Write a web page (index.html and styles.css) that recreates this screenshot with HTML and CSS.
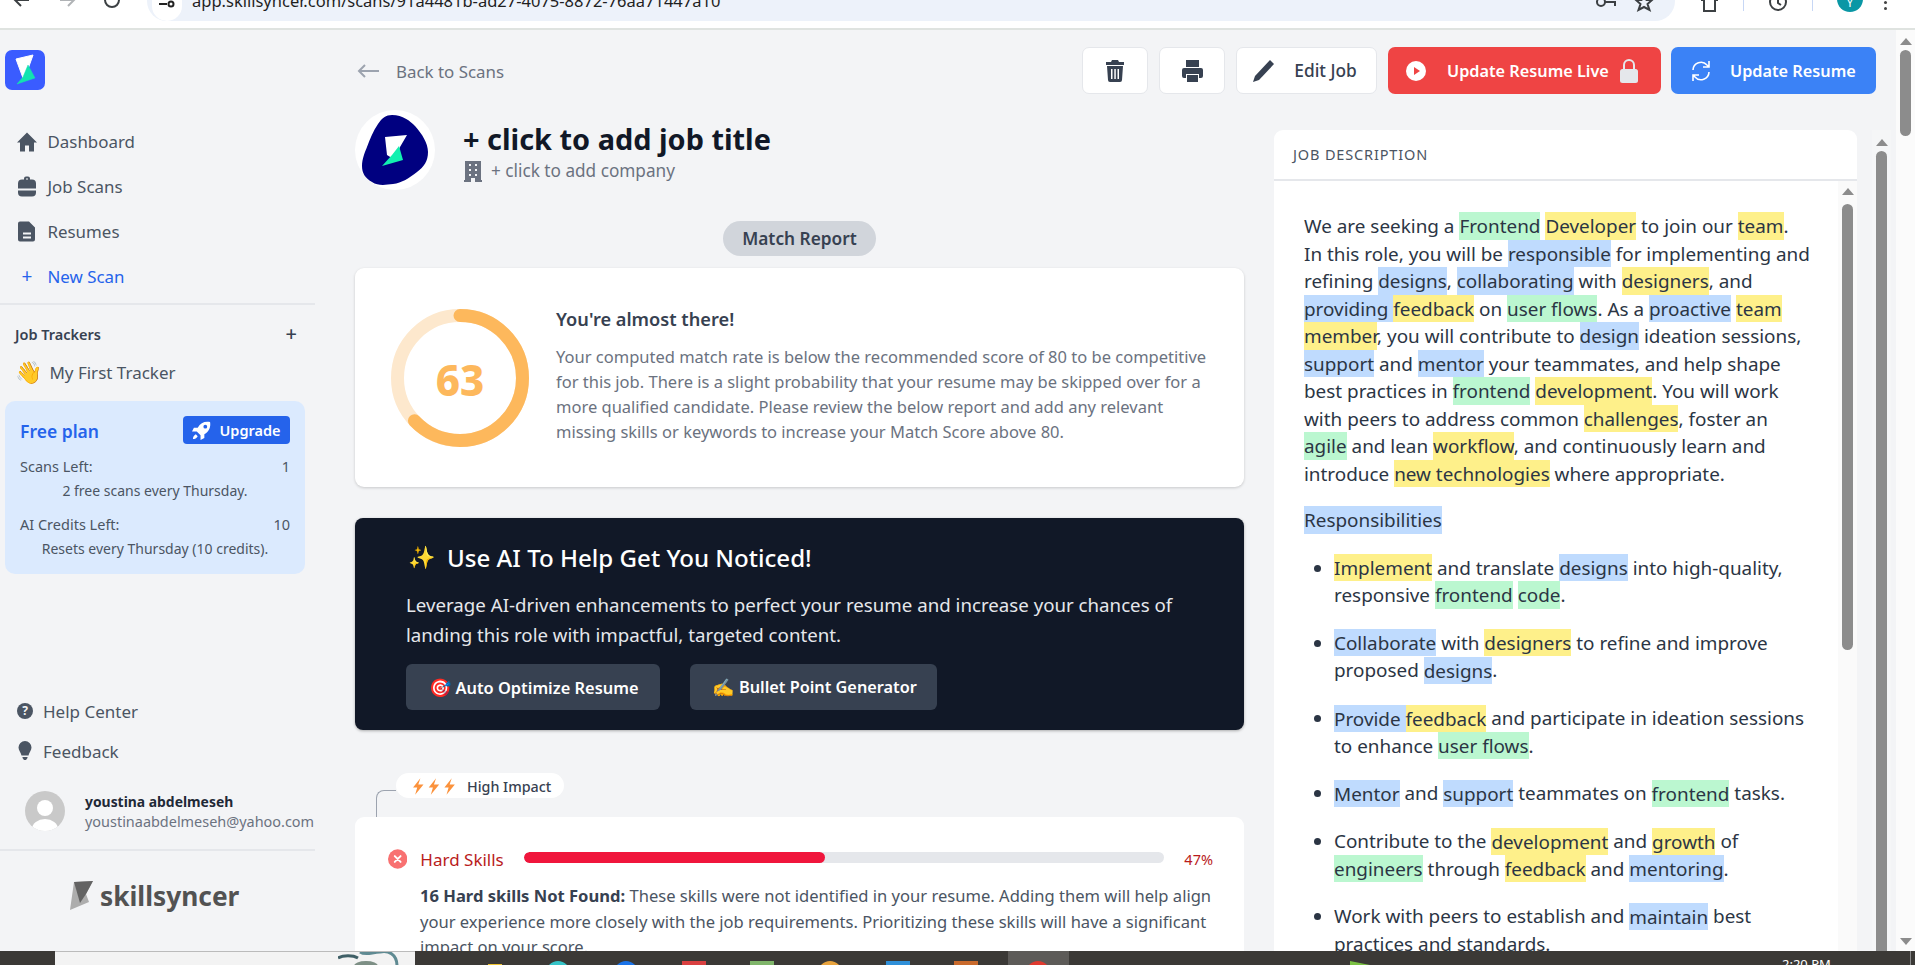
FILE: index.html
```html
<!DOCTYPE html>
<html lang="en">
<head>
<meta charset="utf-8">
<title>SkillSyncer</title>
<link rel="stylesheet" href="styles.css">
</head>
<body>
<header class="chrome">
  <div class="chrome-nav">
    <svg width="20" height="20" viewBox="0 0 20 20" class="cicon"><path d="M17 0H4M9-6L3 0l6 6" /></svg>
    <svg width="20" height="20" viewBox="0 0 20 20" class="cicon dim"><path d="M3 0h13M11-6l6 6-6 6" /></svg>
    <svg width="20" height="20" viewBox="0 0 20 20" class="cicon"><circle cx="10" cy="0" r="7"/></svg>
  </div>
  <div class="urlbar">
    <span class="tune"><svg width="16" height="8" viewBox="0 0 16 8" class="tune-ico"><path d="M0 4h8"/><circle cx="12" cy="4" r="2.500"/></svg></span>
    <span class="url">app.skillsyncer.com/scans/91a4481b-ad27-4075-8872-76aa71447a10</span>
    <span class="url-icons">
      <svg width="24" height="20" viewBox="0 0 24 20" class="cicon"><circle cx="6" cy="2" r="4"/><path d="M10 2h10v4" /></svg>
      <svg width="18" height="20" viewBox="0 0 18 20" class="cicon"><path d="M9-6l2.500 6H17l-4.500 4 2 6L9 7l-5.500 3 2-6L1 0h5.500z"/></svg>
    </span>
  </div>
  <div class="chrome-right">
    <svg width="20" height="20" viewBox="0 0 20 20" class="cicon"><path d="M2 0h3v11h11V0h3"/></svg>
    <span class="sep"></span>
    <svg width="20" height="20" viewBox="0 0 20 20" class="cicon"><circle cx="10" cy="2" r="8"/><path d="M10-2v5l3 2"/></svg>
    <span class="sep"></span>
    <span class="avatar-dot">Y</span>
    <span class="dots"></span>
  </div>
</header>

<div class="app">
  <aside class="sidebar">
    <div class="brand">
      <svg width="40" height="40" viewBox="0 0 40 40"><rect width="40" height="40" rx="7" fill="#3a5cff"/><path d="M11 9l17-4-5 14-5 9z" fill="#fff" stroke="#fff" stroke-linejoin="round"/><path d="M23 15l7 13-18 6 6-7z" fill="#12e3b0" stroke="#12e3b0" stroke-width=".5" stroke-linejoin="round"/></svg>
    </div>
    <nav class="nav">
      <a class="nav-item"><svg class="nav-ico" viewBox="0 0 20 20"><path d="M10 1L0 11h3v9h5v-6h4v6h5v-9h3z"/></svg>Dashboard</a>
      <a class="nav-item"><svg class="nav-ico" viewBox="0 0 20 20"><path d="M7 3V2q0-2 2-2h2q2 0 2 2v1h2q4 0 4 4v5H1V7q0-4 4-4zm2 0h2V2H9zM1 14h18v2q0 4-4 4H5q-4 0-4-4z"/></svg>Job Scans</a>
      <a class="nav-item"><svg class="nav-ico" viewBox="0 0 20 20"><path d="M3 0h9l6 6v12q0 2-2 2H3q-2 0-2-2V2q0-2 2-2zm3 11v2h8v-2zm0 4v2h8v-2z" fill-rule="evenodd"/></svg>Resumes</a>
      <a class="nav-item nav-new"><span class="plus-ico">+</span>New Scan</a>
    </nav>
    <div class="trackers">
      <div class="trackers-head"><span>Job Trackers</span><span class="trackers-plus">+</span></div>
      <div class="tracker"><span class="emoji">👋</span>My First Tracker</div>
    </div>
    <section class="plan">
      <div class="plan-head">
        <span class="plan-name">Free plan</span>
        <button class="upgrade"><svg width="19" height="19" viewBox="0 0 20 20" fill="#fff"><path d="M19 1c-6-1-10 1-13 6H2L0 11l5 0 4 4v5l4-2v-4c5-3 7-8 6-13zM14 4a2 2 0 1 1 0 4 2 2 0 0 1 0-4zM4 14c-2 1-3 3-3 5 2 0 4-1 5-3z" fill-rule="evenodd"/></svg>Upgrade</button>
      </div>
      <div class="plan-row"><span>Scans Left:</span><span>1</span></div>
      <p class="plan-note">2 free scans every Thursday.</p>
      <div class="plan-row"><span>AI Credits Left:</span><span>10</span></div>
      <p class="plan-note">Resets every Thursday (10 credits).</p>
    </section>
    <div class="side-links">
      <a class="side-link"><svg width="16" height="16" viewBox="0 0 16 16"><circle cx="8" cy="8" r="8" fill="#4b5563"/><text x="8" y="12" text-anchor="middle" class="q">?</text></svg>Help Center</a>
      <a class="side-link"><svg width="16" height="20" viewBox="0 0 16 20"><path d="M8 0a6.500 6.500 0 0 1 6.500 6.500c0 3-2.500 5-3 8h-7c-.5-3-3-5-3-8A6.500 6.500 0 0 1 8 0zM5.500 16h5v1l-1.500 2H7l-1.500-2z" fill="#4b5563"/></svg>Feedback</a>
    </div>
    <div class="user">
      <svg class="user-pic" width="40" height="40" viewBox="0 0 40 40"><defs><clipPath id="uc"><circle cx="20" cy="20" r="20"/></clipPath></defs><circle cx="20" cy="20" r="20" fill="#c9c9c9"/><g clip-path="url(#uc)" fill="#fff"><circle cx="20" cy="17" r="8"/><ellipse cx="20" cy="38" rx="13" ry="10"/></g></svg>
      <div class="user-info">
        <div class="user-name">youstina abdelmeseh</div>
        <div class="user-mail">youstinaabdelmeseh@yahoo.com</div>
      </div>
    </div>
    <div class="wordmark">
      <svg width="24" height="30" viewBox="0 0 24 30"><path d="M4 1L23 0l-7 13 3 8L0 29z" fill="#adadad"/><path d="M4 1L23 0l-7 13-6 9z" fill="#636363"/></svg>
      <span>skillsyncer</span>
    </div>
  </aside>

  <main class="main">
    <div class="report">
      <a class="back"><svg width="22" height="14" viewBox="0 0 22 14" fill="none" stroke="#9ca3af" stroke-width="2"><path d="M22 7H2M8 1L2 7l6 6"/></svg>Back to Scans</a>
      <div class="job-head">
        <svg width="80" height="80" viewBox="0 0 80 80"><circle cx="40" cy="40" r="40" fill="#fff"/><path d="M37 5C48 5 55 11 60 16C67 24 73 33 73 42C73 51 69 57 62 62C54 68 47 73 38 74C30 75 23 76 17 72C10 68 7 63 7 56C7 49 10 42 12 37C15 29 18 21 23 14C27 8 31 5 37 5Z" fill="#000080"/><path d="M30 27l22-2-7 12-5 13-8-5z" fill="#fff"/><path d="M44 36l4 14-21 6 10-11z" fill="#12f0b0"/></svg>
        <div class="job-titles">
          <h1>+ click to add job title</h1>
          <div class="company"><svg width="18" height="21" viewBox="0 0 18 21"><path d="M1 0h16v19h1v2h-7v-4H7v4H0v-2h1zm4 3v2h2V3zm6 0v2h2V3zM5 8v2h2V8zm6 0v2h2V8zM5 13v2h2v-2zm6 0v2h2v-2z" fill="#6b7280" fill-rule="evenodd"/></svg>+ click to add company</div>
        </div>
      </div>
      <div class="pill-row"><span class="pill">Match Report</span></div>
      <section class="card score">
        <div class="ring">
          <svg width="138" height="138" viewBox="0 0 138 138"><circle cx="69" cy="69" r="62.500" fill="none" stroke="#fde8cd" stroke-width="13"/><circle cx="69" cy="69" r="62.500" fill="none" stroke="#fdb85c" stroke-width="13" stroke-linecap="round" pathLength="100" stroke-dasharray="63 100" transform="rotate(-90 69 69)"/></svg>
          <span class="ring-num">63</span>
        </div>
        <div class="score-text">
          <h2>You're almost there!</h2>
          <p>Your computed match rate is below the recommended score of 80 to be competitive for this job. There is a slight probability that your resume may be skipped over for a more qualified candidate. Please review the below report and add any relevant missing skills or keywords to increase your Match Score above 80.</p>
        </div>
      </section>
      <section class="ai">
        <h2><span class="emoji">✨</span>Use AI To Help Get You Noticed!</h2>
        <p>Leverage AI-driven enhancements to perfect your resume and increase your chances of landing this role with impactful, targeted content.</p>
        <div class="ai-btns">
          <button class="ai-btn"><span class="emoji">🎯</span>Auto Optimize Resume</button>
          <button class="ai-btn bullet"><span class="emoji">✍️</span>Bullet Point Generator</button>
        </div>
      </section>
      <div class="impact-wrap">
        <span class="connector"></span>
        <span class="impact"><svg width="46" height="17" viewBox="0 0 44 16" fill="#fb923c"><path d="M8 0L1 9h4l-2 7 8-10H6z"/><path d="M23 0l-7 9h4l-2 7 8-10h-5z"/><path d="M38 0l-7 9h4l-2 7 8-10h-5z"/></svg>High Impact</span>
      </div>
      <section class="card skills">
        <div class="skills-head">
          <svg width="20" height="20" viewBox="0 0 20 20"><circle cx="10" cy="10" r="10" fill="#f87171"/><path d="M7 7l6 6M13 7l-6 6" stroke="#fff" stroke-width="2" stroke-linecap="round"/></svg>
          <span class="skills-name">Hard Skills</span>
          <div class="bar"><div class="bar-fill"></div></div>
          <span class="skills-pct">47%</span>
        </div>
        <p class="skills-text"><b>16 Hard skills Not Found:</b> These skills were not identified in your resume. Adding them will help align your experience more closely with the job requirements. Prioritizing these skills will have a significant impact on your score.</p>
      </section>
    </div>

    <div class="actions">
      <button class="btn sq"><svg width="18" height="22" viewBox="0 0 18 22" fill="#374151"><path d="M6 0h6l1 2h5v3H0V2h5zM1 6h16l-1 14q0 2-2 2H4q-2 0-2-2zm4 3v10h1.500V9zm3.300 0v10h1.500V9zm3.200 0v10H13V9z" fill-rule="evenodd"/></svg></button>
      <button class="btn sq"><svg width="21" height="22" viewBox="0 0 21 22" fill="#374151"><path d="M4 0h13v7H4zM2 8h17q2 0 2 2v6q0 2-2 2h-2v-4H4v4H2q-2 0-2-2v-6q0-2 2-2zM5 15h11v7H5z"/></svg></button>
      <button class="btn edit"><svg width="21" height="22" viewBox="0 0 21 22" fill="#374151"><path d="M17 0l4 4L6 20 0 22l2-6z"/></svg>Edit Job</button>
      <button class="btn red"><svg width="20" height="20" viewBox="0 0 20 20"><circle cx="10" cy="10" r="10" fill="#fff"/><path d="M8 6l6 4-6 4z" fill="#ef4444"/></svg>Update Resume Live<svg class="lock" width="18" height="24" viewBox="0 0 18 24"><path d="M4 11V6a5 5 0 0 1 10 0v5" fill="none" stroke="#e5e7eb" stroke-width="2"/><rect y="10" width="18" height="14" rx="2.500" fill="#e5e7eb"/></svg></button>
      <button class="btn blue"><svg width="20" height="22" viewBox="0 0 20 22" fill="none" stroke="#fff" stroke-width="1.600"><path d="M2 10a8 8 0 0 1 14-5l2 2M18 1v6h-6M18 12a8 8 0 0 1-14 5l-2-2M2 21v-6h6"/></svg>Update Resume</button>
    </div>

    <section class="jd">
      <div class="jd-head">JOB DESCRIPTION</div>
      <div class="jd-scroll">
        <div class="jd-body">
          <p>We are seeking a <mark class="g">Frontend</mark> <mark class="y">Developer</mark> to join our <mark class="y">team</mark>.<br>In this role, you will be <mark class="b">responsible</mark> for implementing and refining <mark class="b">designs</mark>, <mark class="b">collaborating</mark> with <mark class="y">designers</mark>, and <mark class="b">providing </mark><mark class="y">feedback</mark> on <mark class="g">user flows</mark>. As a <mark class="b">proactive</mark> <mark class="y">team member</mark>, you will contribute to <mark class="b">design</mark> ideation sessions, <mark class="b">support</mark> and <mark class="b">mentor</mark> your teammates, and help shape best practices in <mark class="g">frontend</mark> <mark class="y">development</mark>. You will work with peers to address common <mark class="y">challenges</mark>, foster an <mark class="g">agile</mark> and lean <mark class="y">workflow</mark>, and continuously learn and introduce <mark class="y">new technologies</mark> where appropriate.</p>
          <p class="resp"><mark class="b">Responsibilities</mark></p>
          <ul>
            <li><mark class="y">Implement</mark> and translate <mark class="b">designs</mark> into high-quality, responsive <mark class="g">frontend</mark> <mark class="g">code</mark>.</li>
            <li><mark class="b">Collaborate</mark> with <mark class="y">designers</mark> to refine and improve proposed <mark class="b">designs</mark>.</li>
            <li><mark class="b">Provide </mark><mark class="y">feedback</mark> and participate in ideation sessions to enhance <mark class="g">user flows</mark>.</li>
            <li><mark class="b">Mentor</mark> and <mark class="b">support</mark> teammates on <mark class="g">frontend</mark> tasks.</li>
            <li>Contribute to the <mark class="y">development</mark> and <mark class="y">growth</mark> of <mark class="g">engineers</mark> through <mark class="y">feedback</mark> and <mark class="b">mentoring</mark>.</li>
            <li>Work with peers to establish and <mark class="b">maintain</mark> best practices and standards.</li>
          </ul>
        </div>
        <div class="sb sb-inner"><span class="sb-up"></span><span class="sb-thumb"></span></div>
      </div>
    </section>
    <div class="sb sb-mid"><span class="sb-up"></span><span class="sb-thumb"></span></div>
    <div class="sb sb-page"><span class="sb-up"></span><span class="sb-thumb"></span><span class="sb-down"></span></div>
  </main>
</div>

<footer class="taskbar">
  <span class="tb-search"><svg width="62" height="14" viewBox="0 0 62 14" fill="none" stroke="#5f8a92" stroke-width="3"><path d="M22 0c6 4 12 0 20 0 8-2 17 2 17 14"/><path d="M0 6c5-3 15-3 20 0" stroke="#3f5f66"/><ellipse cx="28" cy="14" rx="12" ry="5" fill="#7d8f85" stroke="none"/></svg></span>
  <div class="tb-apps">
    <i class="tb-a tb-yellow"></i><i class="tb-a tb-teal"></i><i class="tb-a tb-blue"></i><i class="tb-a tb-red"></i><i class="tb-a tb-green"></i><i class="tb-a tb-orange"></i><i class="tb-a tb-sky"></i><i class="tb-a tb-brown"></i>
    <span class="tb-active"><i class="tb-a tb-chrome"></i></span>
  </div>
  <svg class="tb-tray" width="20" height="14" viewBox="0 0 20 14"><path d="M0 10l20 4H0z" fill="#7ac143"/></svg>
  <span class="tb-time">2:20 PM</span>
  <span class="tb-edge"></span>
</footer>
</body>
</html>
```

FILE: styles.css
```css
* { box-sizing: border-box; }
html, body { margin: 0; height: 965px; overflow: hidden; }
body { font-family: "Noto Sans", "Open Sans", sans-serif; background: #f3f4f6; color: #374151; display: flex; flex-direction: column; }
p, h1, h2, ul { margin: 0; }
button { font-family: inherit; border: 0; cursor: pointer; }
.emoji { font-family: "Noto Color Emoji", "DejaVu Sans", sans-serif; }

.chrome { height: 30px; flex: none; background: #fff; border-bottom: 2px solid #dfe3e0; display: flex; overflow: hidden; }
.chrome-nav { width: 147px; flex: none; display: flex; gap: 25px; padding-left: 12px; }
.cicon { fill: none; stroke: #3c4043; stroke-width: 2; overflow: visible; }
.cicon.dim { stroke: #b0b3b6; }
.urlbar { width: 1528px; height: 21px; flex: none; background: #edf2fa; border-radius: 0 0 20px 20px; display: flex; gap: 10px; padding-left: 5px; position: relative; overflow: hidden; }
.tune { width: 30px; height: 21px; background: #fff; border-radius: 0 0 15px 15px; flex: none; }
.tune-ico { display: block; margin: 0 auto; fill: none; stroke: #222; stroke-width: 2; }
.url { font-size: 16.500px; line-height: 14px; margin-top: -6px; color: #1f1f1f; white-space: nowrap; }
.url-icons { margin-left: auto; display: flex; gap: 16px; padding-right: 22px; }
.chrome-right { flex: 1; display: flex; align-items: flex-start; padding-left: 24px; gap: 24px; }
.sep { width: 1px; height: 11px; background: #c7d7f5; }
.avatar-dot { width: 26px; height: 26px; margin-top: -14px; border-radius: 50%; background: #0a97a5; flex: none; color: #fff; font-size: 12px; line-height: 34px; text-align: center; }
.dots { width: 3px; height: 3px; border-radius: 50%; background: #444; margin: 7px 0 0 -3px; box-shadow: 0 -6px 0 #444; flex: none; }

.app { flex: 1; min-height: 0; display: flex; overflow: hidden; }
.sidebar { width: 315px; flex: none; padding-top: 20px; display: flex; flex-direction: column; }
.brand { padding-left: 5px; height: 40px; }
.nav { margin-top: 29px; padding-bottom: 4px; border-bottom: 2px solid #e5e7eb; }
.nav-item { height: 45px; display: flex; align-items: center; gap: 10.500px; padding-left: 17px; font-size: 16.900px; color: #4b5563; }
.nav-ico { width: 20px; height: 21px; fill: #4b5563; flex: none; }
.nav-new { color: #2563eb; }
.plus-ico { width: 20px; font-size: 19px; text-align: center; line-height: 1; }
.trackers { padding: 17px 0 0 15px; }
.trackers-head { display: flex; justify-content: space-between; align-items: center; font-size: 14.500px; font-weight: 600; color: #374151; padding-right: 18px; height: 24px; }
.trackers-plus { font-size: 20px; font-weight: 500; line-height: 1; }
.tracker { height: 40px; margin-top: 6px; display: flex; align-items: center; gap: 7px; font-size: 17px; color: #4b5563; }
.tracker .emoji { font-size: 22px; }
.plan { margin: 9px 0 0 5px; width: 300px; height: 173px; background: #dbeafe; border-radius: 10px; padding: 15px; color: #4b5563; font-size: 14.500px; }
.plan-head { display: flex; justify-content: space-between; align-items: center; height: 28px; margin-bottom: 9px; }
.plan-name { font-size: 17.500px; font-weight: 600; color: #2563eb; margin-top: 2px; }
.upgrade { width: 107px; height: 28px; background: #2563eb; color: #fff; border-radius: 4px; font-size: 14.500px; font-weight: 600; display: flex; align-items: center; justify-content: center; gap: 8px; padding: 0; }
.plan-row { display: flex; justify-content: space-between; height: 26px; align-items: center; }
.plan-note { height: 26px; line-height: 24px; font-size: 14px; text-align: center; margin-bottom: 6px; }
.side-links { margin-top: auto; display: flex; flex-direction: column; }
.side-link { height: 40px; display: flex; align-items: center; gap: 10px; padding-left: 17px; font-size: 17px; color: #4b5563; }
.user { margin-top: 20px; height: 60px; border-bottom: 2px solid #e5e7eb; display: flex; align-items: flex-start; gap: 20px; padding-left: 25px; }
.user-info { white-space: nowrap; }
.user-name { font-size: 13.900px; font-weight: 700; color: #1f2937; line-height: 20px; margin-top: 1px; }
.user-mail { font-size: 14.450px; color: #6b7280; line-height: 19px; }
.wordmark { height: 100px; display: flex; align-items: flex-start; padding: 30px 0 0 70px; gap: 6px; }
.wordmark span { font-size: 26.300px; font-weight: 700; color: #525252; line-height: 30px; }
.q { fill: #f3f4f6; font-size: 12px; font-weight: 700; font-family: "Noto Sans", sans-serif; }

.main { flex: 1; position: relative; padding: 17px 58px 0 40px; min-width: 0; }
.report { width: 889px; }
.back { height: 48px; display: flex; align-items: center; gap: 17px; font-size: 16.900px; color: #6b7280; padding-left: 2px; }
.job-head { display: flex; gap: 28px; margin-top: 15px; }
.job-titles { padding-top: 10px; }
h1 { font-size: 28.900px; font-weight: 700; line-height: 38px; color: #111827; }
.company { display: flex; align-items: center; gap: 9px; font-size: 17.200px; color: #6b7280; line-height: 22px; margin-top: 2px; padding-left: 1px; }
.pill-row { display: flex; justify-content: center; margin-top: 31px; }
.pill { width: 153px; height: 35px; background: #d1d5db; border-radius: 18px; font-size: 17.300px; font-weight: 600; text-align: center; line-height: 35px; color: #374151; }
.card { background: #fff; border-radius: 9px; box-shadow: 0 1px 3px rgba(0,0,0,.18); }
.score { margin-top: 12px; height: 219px; display: flex; gap: 27px; padding: 41px 36px; }
.ring { width: 138px; height: 138px; position: relative; flex: none; }
.ring-num { position: absolute; inset: 2px 0 0; display: flex; align-items: center; justify-content: center; font-size: 42px; font-weight: 800; color: #fdb85c; }
.score-text { margin-top: -2px; }
.score-text h2 { font-size: 18.200px; font-weight: 600; line-height: 24px; color: #374151; }
.score-text p { font-size: 16.500px; line-height: 25px; color: #6b7280; margin-top: 13px; }
.ai { margin-top: 31px; height: 212px; border-radius: 8px; background: #111827; color: #fff; padding: 24px 51px; box-shadow: 0 1px 3px rgba(0,0,0,.3); }
.ai h2 { font-size: 24.100px; font-weight: 500; line-height: 32px; display: flex; gap: 10px; align-items: center; }
.ai h2 .emoji { width: 31px; font-size: 22px; padding-left: 2px; }
.ai p { font-size: 18.700px; line-height: 30px; color: #e5e7eb; margin-top: 16px; }
.ai-btns { display: flex; gap: 30px; margin-top: 14px; }
.ai-btn { height: 46px; padding: 0 21px 0 23px; background: #374151; color: #fff; border-radius: 6px; font-size: 16.400px; font-weight: 600; display: flex; align-items: center; gap: 4px; }
.ai-btn.bullet { font-size: 16.300px; padding-right: 20px; }
.ai-btn .emoji { font-size: 18px; }
.impact-wrap { margin-top: 43px; height: 44px; padding-left: 41px; position: relative; }
.connector { position: absolute; left: 21px; top: 17px; width: 20px; height: 27px; border: solid #9ca3af; border-width: 1px 0 0 1px; border-radius: 8px 0 0 0; }
.impact { position: relative; display: inline-flex; align-items: center; gap: 9px; height: 25px; padding: 1px 13px 0 16px; background: #fff; border-radius: 13px; font-size: 14.300px; font-weight: 500; color: #374151; }
.skills { height: 200px; padding: 31px 31px 0 33px; border-radius: 9px 9px 0 0; box-shadow: none; }
.skills-head { display: flex; align-items: center; height: 22px; }
.skills-name { font-size: 17px; color: #b91c1c; margin-left: 13px; width: 104px; flex: none; line-height: 22px; margin-top: 2px; }
.bar { width: 640px; height: 11px; background: #e5e7eb; border-radius: 6px; overflow: hidden; flex: none; margin-top: -4px; }
.bar-fill { width: 47%; height: 100%; background: #f0163c; border-radius: 6px; }
.skills-pct { font-size: 14.500px; color: #b91c1c; margin-left: 20px; }
.skills-text { margin: 13px 0 0 32px; font-size: 16.570px; line-height: 25.500px; color: #4b5563; }
.skills-text b { color: #374151; font-weight: 700; }

.actions { position: absolute; top: 17px; left: 767px; display: flex; gap: 11px; }
.btn { height: 47px; border-radius: 7px; font-size: 16.250px; display: flex; align-items: center; justify-content: center; font-weight: 500; padding: 0; }
.btn.sq, .btn.edit { background: #fff; border: 1px solid #e5e7eb; color: #374151; }
.btn.sq { width: 66px; }
.btn.edit { width: 141px; gap: 20px; font-size: 17.300px; padding-right: 3px; }
.btn.red { width: 273px; background: #ef4444; color: #fff; font-weight: 600; gap: 21px; justify-content: flex-start; padding-left: 18px; }
.btn.blue { width: 205px; background: #3b82f6; color: #fff; font-weight: 600; gap: 19px; margin-left: -1px; justify-content: flex-start; padding-left: 20px; }
.lock { margin-left: -10px; }

.jd { position: absolute; left: 959px; top: 100px; width: 583px; height: 821px; background: #fff; border-radius: 9px 9px 0 0; display: flex; flex-direction: column; }
.jd-head { height: 51px; border-bottom: 2px solid #e5e7eb; padding-left: 19px; line-height: 49px; font-size: 14.500px; letter-spacing: .85px; color: #4b5563; flex: none; }
.jd-scroll { flex: 1; position: relative; overflow: hidden; }
.jd-body { padding: 32px 44px 0 30px; font-size: 18.900px; line-height: 27.500px; color: #2b3544; }
.jd-body ul { padding-left: 30px; margin-top: 20px; }
.jd-body li { margin-bottom: 20.300px; }
.resp { margin-top: 19px; }
mark { color: inherit; padding: .6px 0; }
mark.g { background: #bbf7d0; }
mark.y { background: #fef08a; }
mark.b { background: #bfdbfe; }

.sb { position: absolute; width: 19px; display: flex; flex-direction: column; align-items: center; }
.sb-inner { right: 0; top: 0; bottom: 0; padding-top: 7px; background: #fafafa; }
.sb-mid { left: 1557px; top: 100px; bottom: 0; padding-top: 9px; background: #f5f6f7; }
.sb-page { right: 0; top: 0; bottom: 0; padding-top: 8px; background: #fbfbfb; }
.sb-up { width: 0; height: 0; border: 6px solid transparent; border-top: 0; border-bottom: 7px solid #8c8c8c; flex: none; }
.sb-down { width: 0; height: 0; border: 6px solid transparent; border-bottom: 0; border-top: 7px solid #8c8c8c; margin-top: auto; margin-bottom: 6px; }
.sb-thumb { width: 11px; border-radius: 6px; background: #8c8c8c; margin-top: 5px; flex: none; }
.sb-inner .sb-thumb { height: 446px; margin-top: 9px; }
.sb-mid .sb-thumb { flex: 1; border-radius: 6px 6px 0 0; }
.sb-page .sb-thumb { height: 86px; }

.taskbar { height: 14px; flex: none; background: #3b3936; display: flex; position: relative; overflow: hidden; }
.tb-search { width: 360px; margin-left: 55px; height: 14px; background: #f3f3f3; border-top: 1px solid #bbb; flex: none; display: flex; justify-content: flex-end; padding-right: 15px; }
.tb-apps { display: flex; flex: none; margin-left: 73px; gap: 44px; padding-top: 10px; align-items: flex-start; }
.tb-a { display: block; width: 24px; height: 24px; border-radius: 50%; flex: none; }
.tb-yellow { background: #f0c430; width: 14px; height: 5px; border-radius: 0; margin-top: 3px; }
.tb-teal { background: #36c4c8; }
.tb-blue { background: #1a73e8; }
.tb-red { background: #d94040; border-radius: 0; }
.tb-green { background: #7fb56a; border-radius: 0; }
.tb-orange { background: #e8a33d; }
.tb-sky { background: #2f8fd8; border-radius: 0; }
.tb-brown { background: #c96a2c; border-radius: 0; }
.tb-active { width: 61px; height: 14px; background: #5d5b58; margin-top: -10px; flex: none; padding: 10px 0 0 18px; margin-left: -14px; }
.tb-chrome { background: #e03a2f; }
.tb-tray { position: absolute; left: 1350px; top: 0; }
.tb-time { position: absolute; left: 1782px; top: 3px; color: #fff; font-size: 13px; line-height: 20px; white-space: nowrap; }
.tb-edge { position: absolute; left: 1910px; top: 0; width: 1px; height: 14px; background: #8a8a8a; }
```
